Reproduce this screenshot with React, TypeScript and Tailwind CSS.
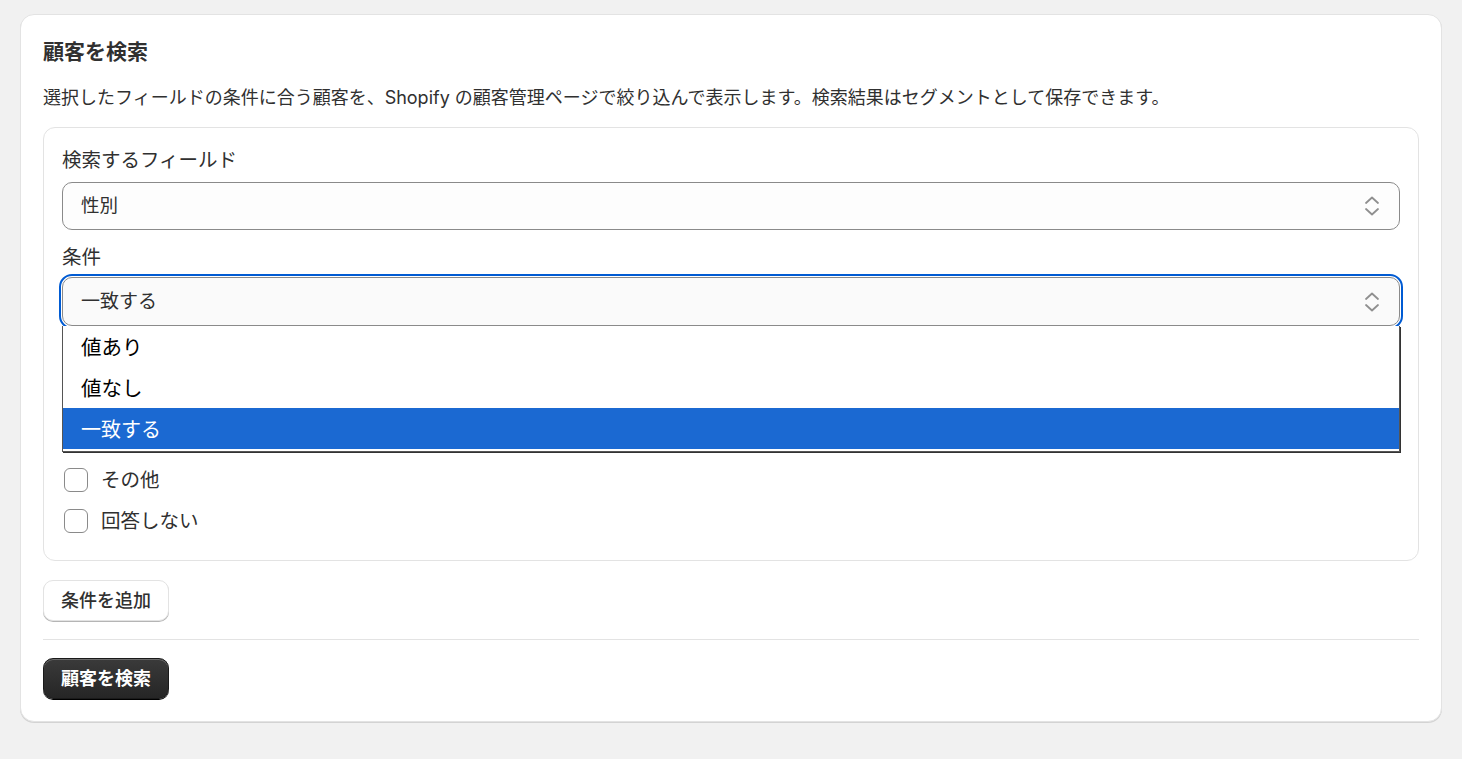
import React from "react";

const UpDown = () => (
  <svg width="20" height="22" viewBox="0 0 20 22" fill="none">
    <path d="M4 8 L10 2.5 L16 8" stroke="#8f8f8f" strokeWidth="1.8" strokeLinecap="round" strokeLinejoin="round" />
    <path d="M4 14 L10 19.5 L16 14" stroke="#8f8f8f" strokeWidth="1.8" strokeLinecap="round" strokeLinejoin="round" />
  </svg>
);

const Checkbox = ({ label }: { label: string }) => (
  <div className="flex h-[41px] items-center">
    <div className="ml-[2px] h-[24px] w-[24px] rounded-[6px] border border-[#8a8a8a] bg-white" />
    <span className="ml-[13px] text-[19.5px] leading-[26px] text-[#303030]">{label}</span>
  </div>
);

export default function App() {
  return (
    <div
      className="min-h-[759px] bg-[#f1f1f1] px-[20px] pt-[14px] pb-[36px]"
      style={{ fontFamily: 'Inter, "Noto Sans CJK JP", sans-serif' }}
    >
      <div className="rounded-[14px] border border-[#e3e3e3] bg-white px-[22px] pt-[22px] pb-[22px] shadow-[0_1px_0_0_rgba(0,0,0,0.12)]">
        <h1 className="text-[21px] font-bold leading-[29px] text-[#303030]">顧客を検索</h1>
        <p className="mt-[18px] text-[18px] leading-[28px] text-[#303030]">
          選択したフィールドの条件に合う顧客を、Shopify の顧客管理ページで絞り込んで表示します。検索結果はセグメントとして保存できます。
        </p>

        <div className="mt-[15px] rounded-[12px] border border-[#e3e3e3] px-[18px] pt-[19px] pb-[19px]">
          <div className="text-[19.5px] leading-[26px] text-[#303030]">検索するフィールド</div>
          <div className="mt-[9px] flex h-[48px] items-center justify-between rounded-[10px] border border-[#8a8a8a] bg-[#fdfdfd] pl-[18px] pr-[17px]">
            <span className="text-[18.5px] text-[#303030]">性別</span>
            <UpDown />
          </div>

          <div className="mt-[14px] text-[19.5px] leading-[26px] text-[#303030]">条件</div>
          <div className="relative mt-[7px]">
            <div className="flex h-[49px] items-center justify-between rounded-[10px] border border-[#8a8a8a] bg-[#fafafa] pl-[18px] pr-[17px] outline-2 outline-offset-[1px] outline-[#005bd3]">
              <span className="pt-[2px] text-[19px] text-[#303030]">一致する</span>
              <UpDown />
            </div>
            <div
              className="absolute left-0 right-0 top-full z-10 border border-t-0 border-[#555] bg-white shadow-[1px_1px_0_0_#333]"
              style={{ fontFamily: '"Noto Sans CJK JP", sans-serif' }}
            >
              <div className="flex h-[41px] items-center pl-[18px] text-[20.5px] text-black">値あり</div>
              <div className="flex h-[41px] items-center pl-[18px] text-[20.5px] text-black">値なし</div>
              <div className="flex h-[41px] items-center bg-[#1b69d2] pl-[18px] text-[20px] text-white">一致する</div>
              <div className="h-[2px] bg-white" />
            </div>
          </div>

          <div className="mt-[10px]">
            <div className="h-[123px]" />
            <Checkbox label="その他" />
            <Checkbox label="回答しない" />
          </div>
        </div>

        <button className="mt-[19px] flex h-[41px] items-center rounded-[10px] border border-[#e3e3e3] bg-white px-[17px] text-[18px] font-medium text-[#303030] shadow-[0_1px_0_0_#b5b5b5]">
          条件を追加
        </button>

        <div className="mt-[18px] border-t border-[#e3e3e3]" />

        <button className="mt-[18px] flex h-[41px] items-center rounded-[10px] border border-[#1a1a1a] bg-gradient-to-b from-[#3a3a3a] to-[#262626] px-[17px] text-[18px] font-bold text-white shadow-[inset_0_1px_0_0_rgba(255,255,255,0.25),0_1px_0_0_#000]">
          顧客を検索
        </button>
      </div>
    </div>
  );
}
